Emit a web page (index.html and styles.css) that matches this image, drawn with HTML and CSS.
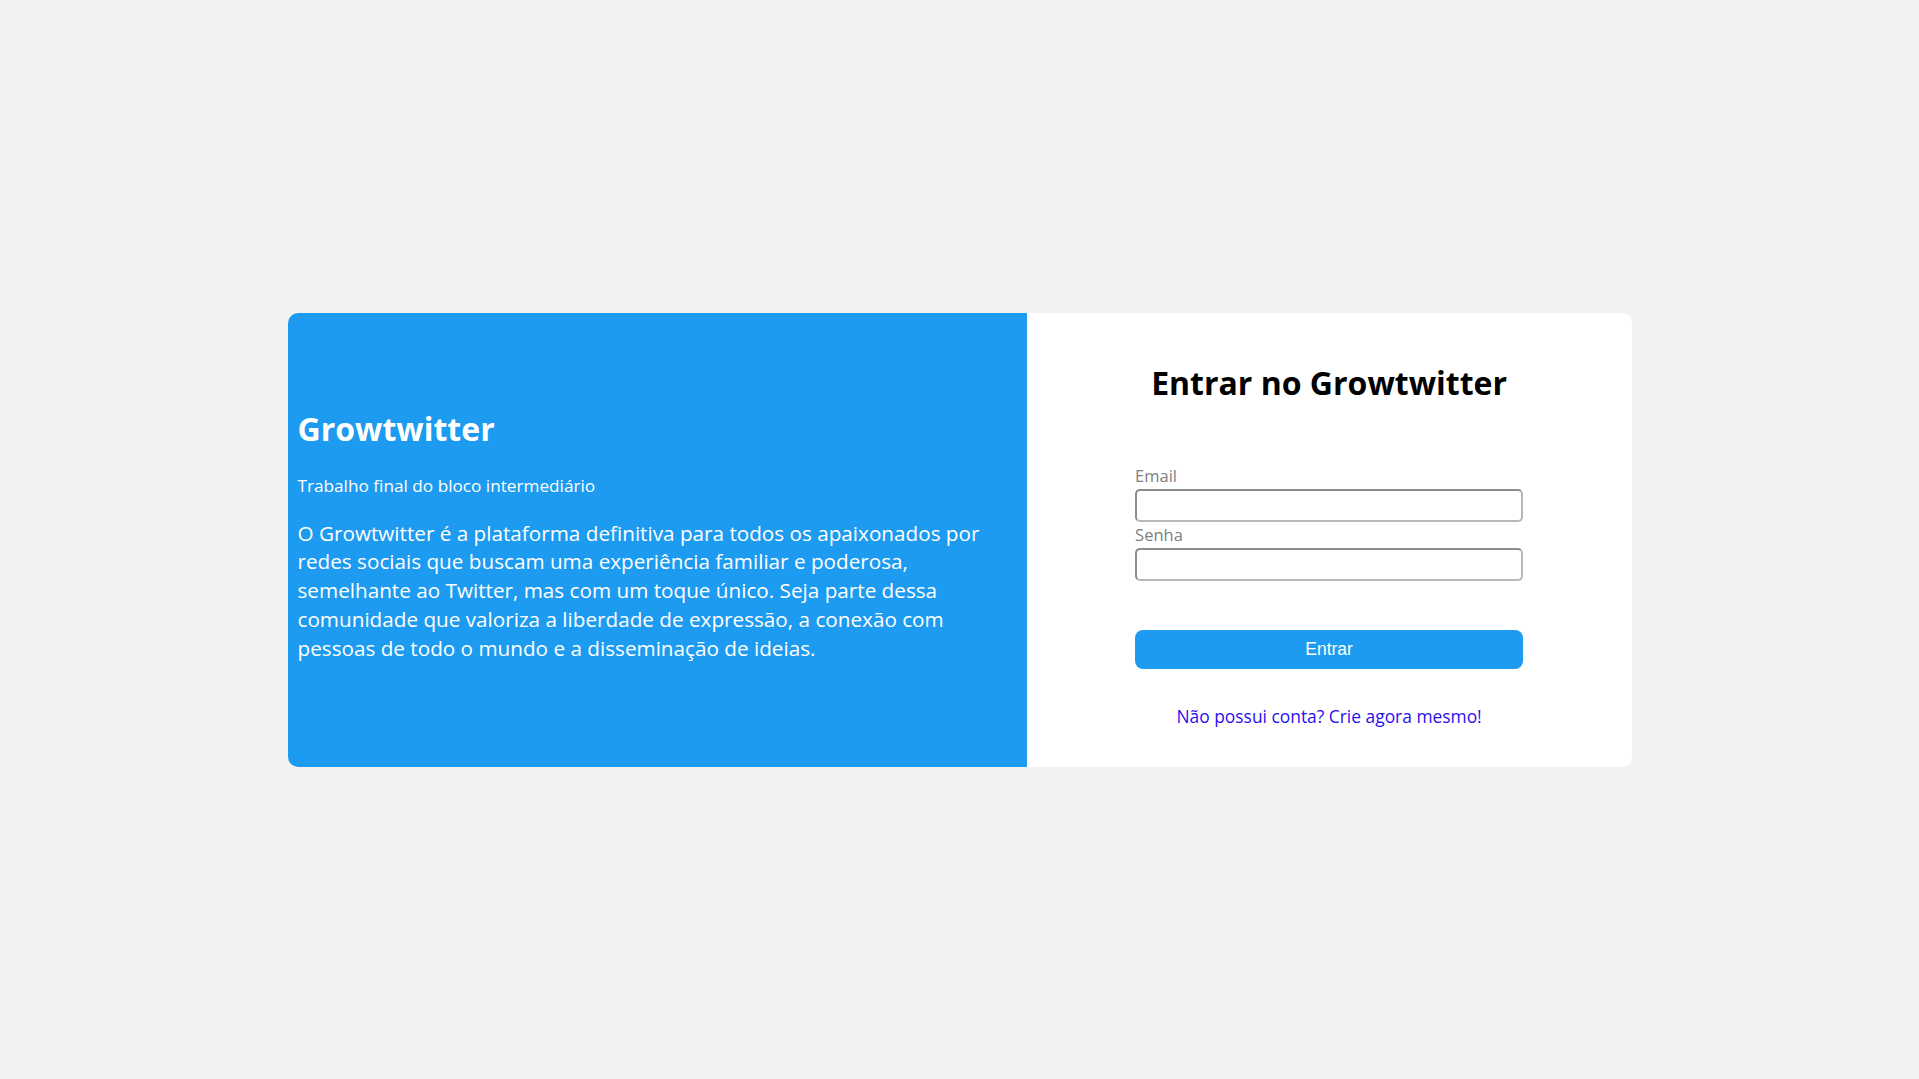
FILE: index.html
```html
<!DOCTYPE html>
<html lang="pt-BR">
<head>
<meta charset="utf-8">
<title>Growtwitter - Login</title>
<link rel="stylesheet" href="styles.css">
</head>
<body>
<main class="page">
  <section class="card">
    <div class="intro">
      <h1 class="intro-title">Growtwitter</h1>
      <p class="intro-subtitle">Trabalho final do bloco intermediário</p>
      <p class="intro-text">O Growtwitter é a plataforma definitiva para todos os apaixonados por redes sociais que buscam uma experiência familiar e poderosa, semelhante ao Twitter, mas com um toque único. Seja parte dessa comunidade que valoriza a liberdade de expressão, a conexão com pessoas de todo o mundo e a disseminação de ideias.</p>
    </div>
    <div class="login">
      <h2 class="login-title">Entrar no Growtwitter</h2>
      <form class="login-form">
        <label class="field-label" for="email">Email</label>
        <input class="field-input" id="email" type="email">
        <label class="field-label" for="senha">Senha</label>
        <input class="field-input" id="senha" type="password">
        <button class="submit-button" type="submit">Entrar</button>
      </form>
      <a class="signup-link" href="#">Não possui conta? Crie agora mesmo!</a>
    </div>
  </section>
</main>
</body>
</html>
```
FILE: styles.css
```css
* {
  box-sizing: border-box;
}

html, body {
  margin: 0;
  padding: 0;
}

body {
  background: #f2f2f2;
  font-family: "Open Sans", "Noto Sans", sans-serif;
}

.page {
  height: 100vh;
  display: flex;
  align-items: center;
  justify-content: center;
}

.card {
  width: 1344px;
  height: 454px;
  display: flex;
  border-radius: 10px;
  overflow: hidden;
  background: #ffffff;
}

.intro {
  width: 55%;
  background: #1d9bf0;
  color: #ffffff;
  padding: 96px 9px 0 10px;
  display: flex;
  flex-direction: column;
}

.intro-title {
  margin: 0;
  font-size: 32px;
  line-height: 40px;
  font-weight: 700;
}

.intro-subtitle {
  margin: 25px 0 0 0;
  font-size: 17.2px;
  line-height: 24px;
}

.intro-text {
  margin: 21px 0 0 0;
  font-size: 20.7px;
  line-height: 28.8px;
}

.login {
  flex: 1;
  background: #ffffff;
  padding-top: 50px;
  display: flex;
  flex-direction: column;
  align-items: center;
}

.login-title {
  margin: 0 0 63px 0;
  font-size: 32px;
  line-height: 40px;
  font-weight: 700;
  color: #000000;
}

.login-form {
  width: 388px;
  display: flex;
  flex-direction: column;
  gap: 3px;
}

.field-label {
  font-size: 16.5px;
  line-height: 20px;
  color: #808080;
}

.field-input {
  height: 33px;
  border: 2px solid;
  border-color: #8d8d8d #b8b8b8 #b8b8b8 #8d8d8d;
  border-radius: 5px;
  background: #ffffff;
  padding: 0 6px;
  font-family: "Open Sans", sans-serif;
  font-size: 15px;
}

.submit-button {
  margin-top: 46px;
  height: 39px;
  border: none;
  border-radius: 8px;
  background: #1d9bf0;
  color: #ffffff;
  font-family: "Liberation Sans", Arial, sans-serif;
  font-size: 17.5px;
  cursor: pointer;
}

.signup-link {
  margin-top: 35px;
  font-size: 17.4px;
  line-height: 24px;
  color: #2a10ee;
  text-decoration: none;
}
```
